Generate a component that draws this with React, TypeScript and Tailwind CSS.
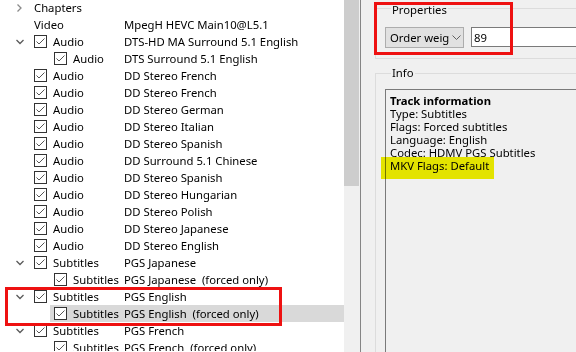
type Row = {
  level: 0 | 1;
  chevron?: "right" | "down";
  check?: boolean;
  type: string;
  value?: string;
  selected?: boolean;
};

const rows: Row[] = [
  { level: 0, chevron: "right", type: "Chapters" },
  { level: 0, type: "Video", value: "MpegH HEVC Main10@L5.1" },
  { level: 0, chevron: "down", check: true, type: "Audio", value: "DTS-HD MA Surround 5.1 English" },
  { level: 1, check: true, type: "Audio", value: "DTS Surround 5.1 English" },
  { level: 0, check: true, type: "Audio", value: "DD Stereo French" },
  { level: 0, check: true, type: "Audio", value: "DD Stereo French" },
  { level: 0, check: true, type: "Audio", value: "DD Stereo German" },
  { level: 0, check: true, type: "Audio", value: "DD Stereo Italian" },
  { level: 0, check: true, type: "Audio", value: "DD Stereo Spanish" },
  { level: 0, check: true, type: "Audio", value: "DD Surround 5.1 Chinese" },
  { level: 0, check: true, type: "Audio", value: "DD Stereo Spanish" },
  { level: 0, check: true, type: "Audio", value: "DD Stereo Hungarian" },
  { level: 0, check: true, type: "Audio", value: "DD Stereo Polish" },
  { level: 0, check: true, type: "Audio", value: "DD Stereo Japanese" },
  { level: 0, check: true, type: "Audio", value: "DD Stereo English" },
  { level: 0, chevron: "down", check: true, type: "Subtitles", value: "PGS Japanese" },
  { level: 1, check: true, type: "Subtitles", value: "PGS Japanese  (forced only)" },
  { level: 0, chevron: "down", check: true, type: "Subtitles", value: "PGS English" },
  { level: 1, check: true, type: "Subtitles", value: "PGS English  (forced only)", selected: true },
  { level: 0, chevron: "down", check: true, type: "Subtitles", value: "PGS French" },
  { level: 1, check: true, type: "Subtitles", value: "PGS French  (forced only)" },
];

function Chevron({ dir }: { dir: "right" | "down" }) {
  return (
    <svg width="16" height="16" viewBox="0 0 16 16" className="shrink-0">
      {dir === "right" ? (
        <path d="M5.5 4.5 L9 8 L5.5 11.5" fill="none" stroke="#8a8a8a" strokeWidth="1.3" />
      ) : (
        <path d="M4.5 6 L8 9.5 L11.5 6" fill="none" stroke="#5a5a5a" strokeWidth="1.3" />
      )}
    </svg>
  );
}

function CheckBox() {
  return (
    <div className="w-[13px] h-[13px] border border-[#333] bg-white shrink-0 flex items-center justify-center">
      <svg width="11" height="11" viewBox="0 0 11 11">
        <path d="M1.5 5.5 L4 8 L9.5 2.5" fill="none" stroke="#555" strokeWidth="1" />
      </svg>
    </div>
  );
}

function TreeRow({ row }: { row: Row }) {
  return (
    <div className="h-[17px] flex items-center shrink-0">
      {row.level === 0 ? (
        <div className="w-[30px] shrink-0 flex pl-[12px]">{row.chevron && <Chevron dir={row.chevron} />}</div>
      ) : (
        <div className="w-[50px] shrink-0" />
      )}
      <div className={`flex-1 h-full flex items-center pl-[4px] ${row.selected ? "bg-[#d9d9d9]" : ""}`}>
        {row.check && <CheckBox />}
        <span
          className={`${row.check ? "ml-[6px]" : ""} ${
            row.check ? (row.level === 0 ? "w-[71px]" : "w-[51px]") : "w-[90px]"
          } shrink-0 whitespace-pre`}
        >
          {row.type}
        </span>
        {row.value && <span className="whitespace-pre">{row.value}</span>}
      </div>
    </div>
  );
}

export default function App() {
  return (
    <div className="relative w-[576px] h-[352px] overflow-hidden flex bg-white text-black text-[11.3px] leading-[15px] font-['Noto_Sans',sans-serif]">
      <div className="w-[344px] h-full overflow-hidden flex flex-col -mt-px">
        {rows.map((r, i) => (
          <TreeRow key={i} row={r} />
        ))}
      </div>
      <div className="w-[16px] h-full bg-[#f0f0f0] shrink-0">
        <div className="w-[15px] h-[186px] bg-[#cdcdcd]" />
      </div>
      <div className="relative flex-1 h-full bg-[#f0f0f0] border-l border-[#858585] overflow-hidden pl-[14px] flex flex-col">
        <fieldset className="mt-[1px] w-[240px] border border-[#dcdcdc] pl-[9px] pt-[12px] pb-[10px]">
          <legend className="ml-[6px] px-[1px] leading-[14px]">
            <span className="relative top-[2px]">Properties</span>
          </legend>
          <div className="flex gap-[7px]">
            <div className="w-[79px] h-[21px] bg-[#e1e1e1] border border-[#adadad] flex items-center pl-[4px] overflow-hidden">
              <span className="w-[59px] overflow-hidden whitespace-nowrap shrink-0">Order weight</span>
              <svg width="9" height="6" viewBox="0 0 9 6" className="ml-[3px] shrink-0">
                <path d="M0.5 0.5 L4.5 4.5 L8.5 0.5" fill="none" stroke="#606060" strokeWidth="1" />
              </svg>
            </div>
            <div className="flex-1 h-[20px] bg-white border border-[#7a7a7a] flex items-center pl-[2px]">89</div>
          </div>
        </fieldset>
        <fieldset className="mt-[7px] w-[240px] flex-1 border border-[#dcdcdc] pl-[9px] pt-[9px]">
          <legend className="ml-[6px] px-[1px] leading-[14px]">Info</legend>
          <div className="h-[300px] border border-[#7a7a7a] bg-[#f0f0f0] pl-[4px] pt-[4px] leading-[13px]">
            <div className="font-bold">Track information</div>
            <div>Type: Subtitles</div>
            <div>Flags: Forced subtitles</div>
            <div>Language: English</div>
            <div>Codec: HDMV PGS Subtitles</div>
            <div>MKV Flags: Default</div>
          </div>
        </fieldset>
        <div className="absolute left-[20px] top-[157px] w-[113px] h-[22px] bg-[#f2f200] mix-blend-multiply" />
        <div className="absolute left-[13px] top-[2px] w-[139px] h-[53px] border-[3px] border-[#ee1111]" />
      </div>
      <div className="absolute left-[5px] top-[287px] w-[277px] h-[39px] border-[3px] border-[#ee1111]" />
    </div>
  );
}
